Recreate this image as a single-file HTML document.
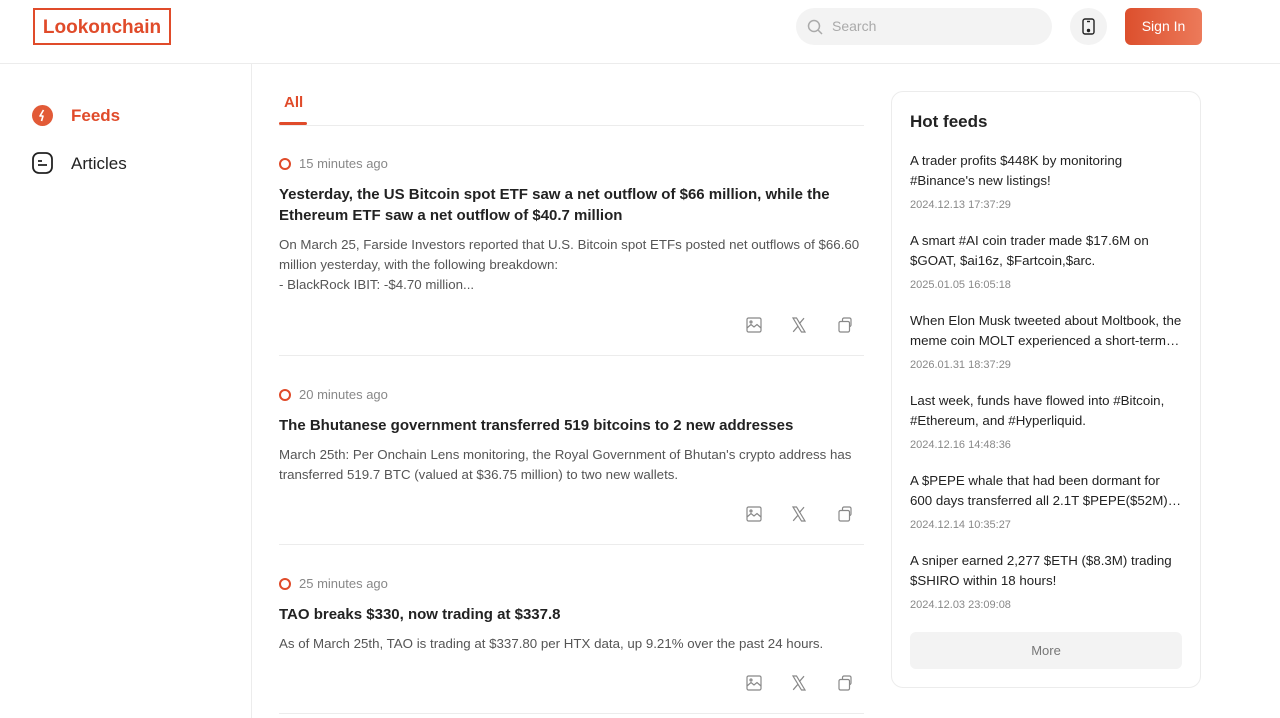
<!DOCTYPE html>
<html><head><meta charset="utf-8"><style>
*{box-sizing:border-box;margin:0;padding:0}
body{width:1280px;height:718px;overflow:hidden;background:#fff;font-family:"Liberation Sans",sans-serif;color:#222;position:relative}
.hdr{position:absolute;left:0;top:0;width:1280px;height:64px;border-bottom:1px solid #ececec}
.logo{position:absolute;left:33px;top:8px;width:138px;height:37px;border:2px solid #e04b2a;color:#e04b2a;font-weight:bold;font-size:19px;text-align:center;line-height:35px}
.search{position:absolute;left:796px;top:8px;width:256px;height:37px;border-radius:19px;background:#f3f3f3;color:#aaa;font-size:14px;line-height:37px;padding-left:36px}
.phone{position:absolute;left:1070px;top:8px;width:37px;height:37px;border-radius:50%;background:#f3f3f3}
.sign{position:absolute;left:1125px;top:8px;width:77px;height:37px;border-radius:6px;background:linear-gradient(90deg,#dc4f2d,#ec7a5a);color:#fff;font-size:14px;text-align:center;line-height:37px}
.side{position:absolute;left:0;top:64px;width:252px;height:654px;border-right:1px solid #ececec}
.nav{position:absolute;left:71px;font-size:17px}
.main{position:absolute;left:279px;top:64px;width:585px}
.tab{position:absolute;left:5px;top:30px;color:#e04b2a;font-weight:bold;font-size:15px}
.tabl{position:absolute;left:0;top:58px;width:28px;height:3px;background:#e04b2a;border-radius:2px}
.tabb{position:absolute;left:0;top:61px;width:585px;border-top:1px solid #ececec}
.item{position:absolute;left:0;width:585px;border-bottom:1px solid #ececec}
.time{font-size:13px;color:#888;padding-left:20px;position:relative;height:16px;line-height:16px}
.time:before{content:"";position:absolute;left:0;top:2px;width:8px;height:8px;border:2px solid #e04b2a;border-radius:50%}
.t{font-weight:bold;font-size:15px;line-height:21px;margin-top:12px}
.d{font-size:13.3px;color:#555;line-height:20px;margin-top:9px}
.hot{position:absolute;left:891px;top:91px;width:310px;height:597px;border:1px solid #ececec;border-radius:12px;padding:0 18px}
.hot h3{font-size:17px;margin-top:20px;margin-bottom:19px}
.h{font-size:13.3px;line-height:20px;height:40px;overflow:hidden;display:-webkit-box;-webkit-line-clamp:2;-webkit-box-orient:vertical}
.hd{font-size:11px;color:#888;margin-top:8px;margin-bottom:20px;height:12px;line-height:12px}
.more{position:absolute;left:18px;top:540px;width:272px;height:37px;background:#f3f3f3;border-radius:6px;color:#777;font-size:13px;text-align:center;line-height:37px}
</style></head><body>
<div class="hdr">
<div class="logo">Lookonchain</div>
<div class="search">Search<svg style="position:absolute;left:11px;top:11px" width="16" height="16" viewBox="0 0 16 16" fill="none" stroke="#aaa" stroke-width="1.5"><circle cx="7" cy="7" r="5.5"/><path d="M11 11l4 4"/></svg></div>
<div class="phone"><svg style="position:absolute;left:12px;top:10px" width="13" height="17" viewBox="0 0 13 17" fill="none" stroke="#222" stroke-width="1.4"><rect x="1" y="1" width="11" height="15" rx="2"/><path d="M5 3.5h3"/><circle cx="6.5" cy="12.5" r="1" fill="#222"/></svg></div>
<div class="sign">Sign In</div>
</div>
<div class="side">
<svg style="position:absolute;left:32px;top:41px" width="21" height="21" viewBox="0 0 21 21"><circle cx="10.5" cy="10.5" r="10.5" fill="#e25a37"/><path d="M11.5 5L8 11h3l-1.5 5" fill="none" stroke="#fff" stroke-width="1.6" stroke-linejoin="round"/></svg>
<div class="nav" style="top:42px;color:#e04b2a;font-weight:bold">Feeds</div>
<svg style="position:absolute;left:32px;top:88px" width="21" height="22" viewBox="0 0 21 22" fill="none" stroke="#222" stroke-width="1.8"><rect x="1" y="1" width="19" height="20" rx="6"/><path d="M6 9h4M6 13h9"/></svg>
<div class="nav" style="top:90px">Articles</div>
</div>
<div class="main">
<div class="tab">All</div><div class="tabl"></div><div class="tabb"></div>
<div class="item" style="top:92px;height:200px">
<div class="time">15 minutes ago</div>
<div class="t">Yesterday, the US Bitcoin spot ETF saw a net outflow of $66 million, while the Ethereum ETF saw a net outflow of $40.7 million</div>
<div class="d">On March 25, Farside Investors reported that U.S. Bitcoin spot ETFs posted net outflows of $66.60 million yesterday, with the following breakdown:<br>- BlackRock IBIT: -$4.70 million...</div>
</div>
<div class="item" style="top:323px;height:158px">
<div class="time">20 minutes ago</div>
<div class="t">The Bhutanese government transferred 519 bitcoins to 2 new addresses</div>
<div class="d">March 25th: Per Onchain Lens monitoring, the Royal Government of Bhutan's crypto address has transferred 519.7 BTC (valued at $36.75 million) to two new wallets.</div>
</div>
<div class="item" style="top:512px;height:138px">
<div class="time">25 minutes ago</div>
<div class="t">TAO breaks $330, now trading at $337.8</div>
<div class="d">As of March 25th, TAO is trading at $337.80 per HTX data, up 9.21% over the past 24 hours.</div>
</div>
</div>
<svg width="0" height="0" style="position:absolute"><defs>
<g id="icons" fill="none" stroke="#888" stroke-width="1.2"><rect x="1" y="1" width="14" height="14" rx="1.5"/><path d="M1 11l4-3.5 3 2.5 3-2.5 4 3.5"/><circle cx="5" cy="5" r="1"/>
<path d="M47 1h3.5l8.5 14h-3.5zM58 1.2l-4.8 5.6M47.2 14.8l4.8-5.6"/>
<rect x="93" y="4.5" width="10.5" height="10.5" rx="1.5"/><path d="M96.5 4.5V2.5A1.5 1.5 0 0 1 98 1h5.5A1.5 1.5 0 0 1 105 2.5v5.5a1.5 1.5 0 0 1-1.5 1.5"/></g></defs></svg>
<svg style="position:absolute;left:746px;top:317px" width="110" height="16"><use href="#icons"/></svg>
<svg style="position:absolute;left:746px;top:506px" width="110" height="16"><use href="#icons"/></svg>
<svg style="position:absolute;left:746px;top:675px" width="110" height="16"><use href="#icons"/></svg>
<div class="hot">
<h3>Hot feeds</h3>
<div class="h">A trader profits $448K by monitoring #Binance's new listings!</div><div class="hd">2024.12.13 17:37:29</div>
<div class="h">A smart #AI coin trader made $17.6M on $GOAT, $ai16z, $Fartcoin,$arc.</div><div class="hd">2025.01.05 16:05:18</div>
<div class="h">When Elon Musk tweeted about Moltbook, the meme coin MOLT experienced a short-term move</div><div class="hd">2026.01.31 18:37:29</div>
<div class="h">Last week, funds have flowed into #Bitcoin, #Ethereum, and #Hyperliquid.</div><div class="hd">2024.12.16 14:48:36</div>
<div class="h">A $PEPE whale that had been dormant for 600 days transferred all 2.1T $PEPE($52M) to exchanges</div><div class="hd">2024.12.14 10:35:27</div>
<div class="h">A sniper earned 2,277 $ETH ($8.3M) trading $SHIRO within 18 hours!</div><div class="hd">2024.12.03 23:09:08</div>
<div class="more">More</div>
</div>
</body></html>
